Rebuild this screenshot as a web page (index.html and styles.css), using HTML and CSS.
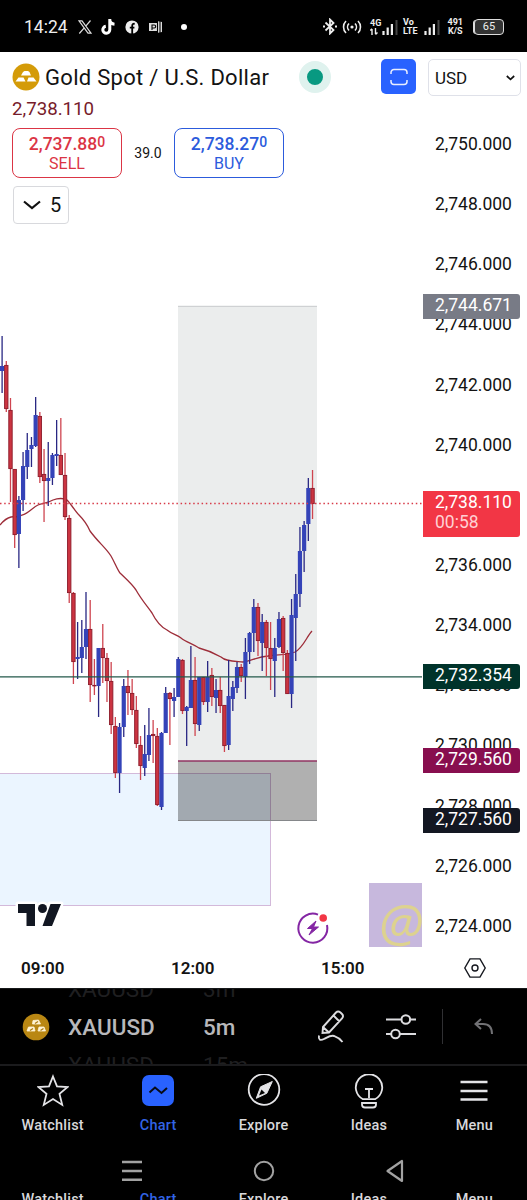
FILE: index.html
```
<!DOCTYPE html>
<html lang="en">
<head>
    <meta charset="UTF-8">
    <meta name="viewport" content="width=device-width, initial-scale=1.0">
    <title>XAUUSD Chart</title>
    <link rel="stylesheet" href="styles.css">
</head>
<body>
    <div class="status-bar">
        <div class="status-left">
            <span class="clock">14:24</span>
            <svg class="x-icon" width="14" height="14" viewBox="0 0 14 14"><path d="M1 .8h3l9 12.4h-3zM12.5.5 8 5.8M5.8 8.4 1.3 13.5" fill="none" stroke="#ddd" stroke-width="1.2"/></svg>
            <svg class="tiktok-icon" width="15" height="16" viewBox="0 0 15 16"><path d="M8.8 0v10.8a3.5 3.5 0 1 1-4-3.5M8.8 1c.3 2.5 2 4 4.7 4.2" fill="none" stroke="#fff" stroke-width="3"/></svg>
            <svg class="fb-icon" width="14" height="14" viewBox="0 0 14 14"><circle cx="7" cy="7" r="6.6" fill="#eee"/><path d="M7.2 14V6c0-1.7.7-2.4 2.5-2.2M4.8 7.6h4.6" fill="none" stroke="#000" stroke-width="1.8"/></svg>
            <svg class="pp-icon" width="14" height="14" viewBox="0 0 14 14"><path d="M0 3h8v8H0zM8 1l5 1v10l-5 1z" fill="#ddd"/><path d="M3 10V5h2.2a1.4 1.4 0 0 1 0 3H3M8.5 1v12M11 1v12" fill="none" stroke="#000" stroke-width="1.1"/></svg>
            <span class="dot"></span>
        </div>
        <div class="status-right">
            <svg width="14" height="17" viewBox="0 0 14 17"><path d="m2.5 4.5 8 7.5L7 15.5v-14L10.500 5l-8 7.500" fill="none" stroke="#eee" stroke-width="1.800"/><path d="M0 8.500h2M12 8.500h2" stroke="#eee" stroke-width="2"/></svg>
            <svg class="hotspot" width="20" height="14" viewBox="0 0 20 14"><circle cx="10" cy="7" r="1.600" fill="#eee"/><path d="M7 3.500a5 5 0 0 0 0 7M13 3.500a5 5 0 0 1 0 7M4 1a8.500 8.500 0 0 0 0 12M16 1a8.500 8.500 0 0 1 0 12" fill="none" stroke="#eee" stroke-width="1.600"/></svg>
            <div class="signal">
                <div class="stack"><span>4G</span><svg width="8" height="7" viewBox="0 0 8 7"><path d="M2 7V1M.3 2.500 2 .8M5.500 0v6M7.500 4.500 5.500 6.500" stroke="#eee" stroke-width="1.400"/></svg></div>
                <svg class="bars" width="16" height="16" viewBox="0 0 16 16"><path d="M1.500 12v4M5.700 8.500V16M9.900 5v11" stroke="#eee" stroke-width="2.200"/><path d="M14.500 1v15" stroke="#444" stroke-width="2"/></svg>
            </div>
            <div class="stack volte"><span>Vo</span><span>LTE</span></div>
            <svg class="bars second" width="16" height="16" viewBox="0 0 16 16"><path d="M1.500 12v4M5.700 8.500V16M9.900 5v11" stroke="#eee" stroke-width="2.200"/><path d="M14.500 1v15" stroke="#444" stroke-width="2"/></svg>
            <div class="stack speed"><span>491</span><span>K/S</span></div>
            <div class="battery"><span>65</span></div>
        </div>
    </div>

    <div class="chart">
        <svg class="chart-canvas" width="422" height="896" viewBox="0 52 422 896">
            <rect class="zone" x="-5" y="773.500" width="275.500" height="132"/>
            <rect class="target" x="178" y="306" width="139" height="455"/>
            <rect class="stop" x="178" y="761" width="139" height="60"/>
            <path d="M178 306.300h139" stroke="#c9cacc"/>
            <path d="M178 820.500h139" stroke="#85878a"/>
            <path d="M178 761h139" stroke="#923562" stroke-width="1.400"/>
            <path class="ma" d="M0 525C4 520 7 518 11 517S18 518 22 515C29 513 33 507 38 505C44 503 48 503 53 500C58 498 64 498 67 500C71 504 75 511 79 515C84 520 87 524 90 531C98 542 106 548 111 556C115 563 117 569 120 573C126 579 131 583 136 590C141 599 147 606 152 613C156 621 161 627 167 630C172 634 177 635 181 638C186 642 193 644 199 648C207 650 214 653 221 657C225 661 233 661 243 662C251 661 257 657 268 656C277 654 286 656 295 652C303 648 307 636 312 631"/>
            <g id="candles"></g>
            <path d="M0 503.500h422" stroke="#d83a48" stroke-width="1.400" stroke-dasharray="1.500 2.700"/>
            <path d="M0 676.800h422" stroke="#23594a" stroke-width="1.300"/>
        </svg>

        <div class="pane">
            <div class="title-row">
                <svg width="28" height="28" viewBox="0 0 28 28"><circle cx="14" cy="14" r="13.500" fill="#d49b08"/><path d="m11 9 1.500-1h3.500l1.500 1 1.500 3.500H9zM6.500 14.500h5l2 4H3.500zM16.500 14.500h5l3 4h-9.500z" fill="#fff"/></svg>
                <h1>Gold Spot / U.S. Dollar</h1>
                <span class="market-open"></span>
                <button class="fullscreen"><svg width="18" height="18" viewBox="0 0 18 18"><path d="M1 6V4.500A3 3 0 0 1 4 1.500h10a3 3 0 0 1 3 3V6M1 12v1.500a3 3 0 0 0 3 3h10a3 3 0 0 0 3-3V12" fill="none" stroke="#e9eeff" stroke-width="1.500"/></svg></button>
            </div>
            <div class="last-price">2,738.110</div>
            <div class="trade-row">
                <button class="trade sell"><b>2,737.88<sup>0</sup></b><span>SELL</span></button>
                <span class="spread">39.0</span>
                <button class="trade buy"><b>2,738.27<sup>0</sup></b><span>BUY</span></button>
            </div>
            <button class="indicators"><svg width="18" height="10" viewBox="0 0 18 10"><path d="m1 1.500 8 6.500 8-6.500" fill="none" stroke="#111" stroke-width="2.200"/></svg>5</button>
        </div>

        <div class="axis">
            <button class="currency">USD<svg width="9" height="6" viewBox="0 0 9 6"><path d="m.8 1 3.700 3.300L8.200 1" fill="none" stroke="#111" stroke-width="1.700"/></svg></button>
            <div class="prices">
                <span>2,750.000</span>
                <span>2,748.000</span>
                <span>2,746.000</span>
                <span>2,744.000</span>
                <span>2,742.000</span>
                <span>2,740.000</span>
                <span>2,738.000</span>
                <span>2,736.000</span>
                <span>2,734.000</span>
                <span>2,732.000</span>
                <span>2,730.000</span>
                <span>2,728.000</span>
                <span>2,726.000</span>
                <span>2,724.000</span>
            </div>
            <div class="tag tag-target">2,744.671</div>
            <div class="tag tag-last">2,738.110<small>00:58</small></div>
            <div class="tag tag-level">2,732.354</div>
            <div class="tag tag-entry">2,729.560</div>
            <div class="tag tag-stop">2,727.560</div>
        </div>

        <div class="times">
            <span>09:00</span>
            <span>12:00</span>
            <span>15:00</span>
        </div>
        <div class="axis-settings">
            <svg width="22" height="20" viewBox="0 0 22 20"><path d="M6 .9h10L21.200 10 16 19.100H6L.8 10z" fill="none" stroke="#16181f" stroke-width="1.400"/><circle cx="11" cy="10" r="3" fill="none" stroke="#16181f" stroke-width="1.400"/></svg>
        </div>

        <svg class="tv-logo" width="50" height="30" viewBox="0 0 50 30"><g stroke="#fff" stroke-width="5" stroke-linejoin="round" fill="#fff"><path d="M3 4h17v22h-8.500V13H3zM35 4h11l-9.500 22H28z"/><circle cx="27.500" cy="8.500" r="4.500"/></g><g fill="#121722"><path d="M3 4h17v22h-8.500V13H3zM35.500 4H46l-9 22h-9.500z"/><circle cx="27.500" cy="8.500" r="4.500"/></g></svg>
        <svg class="flash" width="34" height="34" viewBox="0 0 34 34"><path d="M22 3.600A14.500 14.500 0 1 0 31 14" fill="none" stroke="#8426a4" stroke-width="2"/><path d="m20 10-8.500 7.500h5L13 24l9.500-8h-5z" fill="#8426a4" stroke="#8426a4" stroke-linejoin="round"/><circle cx="27.200" cy="7" r="3.800" fill="#f23645"/></svg>
        <div class="note">@</div>
    </div>

    <div class="toolbar">
        <div class="symbol">
            <svg width="28" height="28" viewBox="0 0 28 28"><circle cx="14" cy="14" r="13.300" fill="#b98713"/><g fill="#fff4d5" stroke="#fff4d5" stroke-width=".8" stroke-linejoin="round"><path d="m11 7.500 5.500-.5L18.500 11h-8zM6.500 14h5.500l1 4H5zM17 14h5l1.500 4h-7.500z"/></g><path d="m13 10.500 3-2M8 17.500l3-2M18.500 17.500l3-2" stroke="#ad7d15" stroke-width="1.400"/></svg>
        </div>
        <div class="wheel wheel-symbol"><span>XAUUSD</span><strong>XAUUSD</strong><span>XAUUSD</span></div>
        <div class="wheel wheel-interval"><span>3m</span><strong>5m</strong><span>15m</span></div>
        <svg class="draw" width="30" height="36" viewBox="0 0 30 36"><path d="m6 18 13-14.500q2-2 4.500 0l1.500 1.500q2 2 0 4.500L12 23.500l-6.500.5zM16.500 6.500l6 6M6.500 18.500l5 4.500" fill="none" stroke="#dcdcdf" stroke-width="1.900"/><path d="M2 26.500c-.8 4 1 5.500 5 3.500s7-4 10-3 5 1.500 8.500 6" fill="none" stroke="#dcdcdf" stroke-width="1.900"/></svg>
        <svg class="sliders" width="30" height="26" viewBox="0 0 30 26"><path d="M0 5.500h15.500M24 5.500h6M0 20h5M14 20h16" stroke="#dcdcdf" stroke-width="2"/><circle cx="19.800" cy="5.500" r="4.300" fill="none" stroke="#dcdcdf" stroke-width="2"/><circle cx="9.500" cy="20" r="4.300" fill="none" stroke="#dcdcdf" stroke-width="2"/></svg>
        <span class="divider"></span>
        <svg class="undo" width="20" height="17" viewBox="0 0 20 17"><path d="M7 1 1.500 6 7 11M1.500 6H9c6 0 9 4 9 10" fill="none" stroke="#717174" stroke-width="2"/></svg>
    </div>

    <div class="nav">
        <a><svg width="32" height="34" viewBox="0 0 32 34"><path d="m16 2.500 4 9.800 10.700.7-8.200 6.900 2.700 11L16 25l-9.200 5.900 2.700-11L1.300 13l10.700-.7z" fill="none" stroke="#e4e4e7" stroke-width="1.800"/></svg>Watchlist</a>
        <a class="active"><svg width="32" height="34" viewBox="0 0 32 34"><rect y="1" width="32" height="31" rx="7" fill="#2962ff"/><path d="m7.500 18.500 5.500-5 6.500 5.500 5.500-5" fill="none" stroke="#080b16" stroke-width="2"/></svg>Chart</a>
        <a><svg width="34" height="34" viewBox="0 0 34 34"><circle cx="17" cy="15.500" r="15.300" fill="none" stroke="#e4e4e7" stroke-width="1.800"/><path d="m25.300 7.500-5.500 11.800-10.500 5 4.300-11.500z" fill="#e4e4e7" stroke="#e4e4e7" stroke-linejoin="round"/><path d="m12 21.500 2.500-6 3.500 3.500z" fill="#000"/></svg>Explore</a>
        <a><svg width="30" height="36" viewBox="0 0 30 36"><path d="M9 25.200a13.200 13.200 0 1 1 12 0z" fill="none" stroke="#e4e4e7" stroke-width="1.800"/><path d="M11 15h8M15 15v9M8 29h14v1.500a3 3 0 0 1-3 3h-8a3 3 0 0 1-3-3z" fill="none" stroke="#e4e4e7" stroke-width="1.800"/></svg>Ideas</a>
        <a><svg width="28" height="34" viewBox="0 0 28 34"><path d="M.5 8h27M.5 17h27M.5 25.500h27" stroke="#e4e4e7" stroke-width="2.500"/></svg>Menu</a>
    </div>
    <div class="system-nav">
        <span><svg width="20" height="22" viewBox="0 0 20 22"><path d="M0 2h20M0 11h20M0 19.800h20" stroke="#a2a2a2" stroke-width="2.500"/></svg></span>
        <span><svg width="22" height="22" viewBox="0 0 22 22"><circle cx="11" cy="11" r="9.200" fill="none" stroke="#a2a2a2" stroke-width="2"/></svg></span>
        <span><svg width="20" height="24" viewBox="0 0 20 24"><path d="M17 2v20L2.500 12z" fill="none" stroke="#a2a2a2" stroke-width="2.200" stroke-linejoin="round"/></svg></span>
    </div>
    <div class="nav-overflow">
        <span>Watchlist</span><span class="active">Chart</span><span>Explore</span><span>Ideas</span><span>Menu</span>
    </div>

    <script src="chart.js"></script>
</body>
</html>
```
FILE: styles.css
```
/* General Styles */
* {
    box-sizing: border-box;
}

body {
    margin: 0;
    width: 527px;
    height: 1200px;
    overflow: hidden;
    background: #000;
    color: #131313;
    font-family: Roboto, sans-serif;
}

button {
    background: #fff;
    font-family: inherit;
    padding: 0;
}

svg {
    display: block;
    flex: none;
}

/* Status bar */
.status-bar {
    height: 52px;
    display: flex;
    justify-content: space-between;
    padding: 1px 24px 0;
    color: #eee;
}

.status-left, .status-right {
    display: flex;
    align-items: center;
}

.clock {
    font-size: 17.5px;
    width: 54px;
}

.tiktok-icon {
    margin-left: 9px;
}

.fb-icon {
    margin-left: 9px;
}

.pp-icon {
    margin-left: 10px;
}

.dot {
    width: 6px;
    height: 6px;
    margin-left: 18px;
    border-radius: 50%;
    background: #fff;
}

.status-right {
    margin-right: -1px;
}

.hotspot {
    margin-left: 5px;
}

.signal {
    display: flex;
    align-items: flex-end;
    margin-left: 8px;
}

.stack {
    display: flex;
    flex-direction: column;
    font-size: 9px;
    font-weight: 700;
    line-height: 9px;
}

.signal .stack {
    width: 12px;
}

.volte {
    margin-left: 5px;
}

.second {
    margin-left: 6px;
}

.speed {
    margin-left: 8px;
    align-items: center;
}

.battery {
    width: 30px;
    height: 16px;
    margin-left: 11px;
    border: 1.5px solid #ddd;
    border-radius: 4px;
    background: #333;
    box-shadow: -2px 0 0 -1px #ddd;
    font-size: 11px;
    line-height: 14px;
    text-align: center;
}

/* Chart */
.chart {
    position: relative;
    height: 936px;
    display: grid;
    grid-template-columns: 422px 105px;
    grid-template-rows: 896px 40px;
    background: #fff;
}

.chart-canvas {
    position: absolute;
    left: 0;
    top: 0;
}

.zone {
    fill: #ebf5ff;
    stroke: #d3b9da;
}

.target {
    fill: #ebeded;
}

.stop {
    fill: rgba(0, 0, 0, 0.31);
}

.ma {
    fill: none;
    stroke: #9d2d39;
    stroke-width: 1.3;
}

.pane {
    position: relative;
    padding: 6px 6px 0 12px;
}

.title-row {
    display: flex;
    align-items: center;
    height: 38px;
}

h1 {
    margin: 0 0 0 5px;
    width: 254px;
    font-size: 22px;
    font-weight: 400;
    letter-spacing: 0.3px;
    white-space: nowrap;
}

.market-open {
    width: 32px;
    height: 32px;
    border: 8.500px solid #dff2ee;
    border-radius: 50%;
    background: #089981;
}

.fullscreen {
    width: 35px;
    height: 35px;
    margin: -1px 0 0 auto;
    display: flex;
    align-items: center;
    justify-content: center;
    border: none;
    border-radius: 5px;
    background: #2962ff;
}

.last-price {
    height: 32px;
    line-height: 27px;
    font-size: 18.7px;
    color: #771c2b;
}

.trade-row {
    display: flex;
    align-items: center;
}

.trade {
    width: 110px;
    height: 50px;
    display: flex;
    flex-direction: column;
    align-items: center;
    justify-content: center;
    border: 1.5px solid;
    border-radius: 8px;
    font-size: 16px;
    line-height: 19px;
}

.trade b {
    font-size: 17.5px;
    font-weight: 500;
    line-height: 20px;
}

.trade sup {
    font-size: 14px;
    line-height: 0;
    vertical-align: 3px;
}

.sell {
    color: #db3545;
}

.buy {
    color: #2c5bdc;
}

.spread {
    width: 52px;
    font-size: 14px;
    text-align: center;
}

.indicators {
    width: 56px;
    height: 38px;
    margin: 8px 0 0 1px;
    padding-left: 2px;
    display: flex;
    align-items: center;
    justify-content: center;
    gap: 9px;
    border: 1px solid #d8d9dd;
    border-radius: 4px;
    font-size: 20px;
    color: #131313;
}

/* Price axis */
.axis {
    position: relative;
    padding-top: 7px;
}

.currency {
    width: 93px;
    height: 37px;
    margin-left: 6px;
    padding: 0 5px 0 6px;
    display: flex;
    align-items: center;
    justify-content: space-between;
    border: 1px solid #dfe1e9;
    border-radius: 5px;
    font-size: 17px;
    color: #131313;
}

.prices {
    height: 802px;
    margin-top: 38px;
    padding-left: 13px;
    display: flex;
    flex-direction: column;
    justify-content: space-between;
    font-size: 17.5px;
    line-height: 20px;
}

.tag {
    position: absolute;
    left: 1px;
    width: 97px;
    height: 25px;
    padding-left: 12px;
    border-radius: 0 3px 3px 0;
    color: #fff;
    font-size: 17.5px;
    line-height: 22px;
}

.tag small {
    display: block;
    font-size: 17.5px;
    line-height: 19px;
    color: #ffd0d3;
}

.tag-target {
    top: 242px;
    background: #787b86;
}

.tag-last {
    top: 439px;
    height: 46px;
    background: #f23645;
}

.tag-level {
    top: 612px;
    background: #00332a;
}

.tag-entry {
    top: 696px;
    background: #880e4f;
}

.tag-stop {
    top: 756px;
    background: #131722;
}

/* Time axis */
.times {
    display: flex;
    align-items: center;
    gap: 106.500px;
    padding-left: 21px;
    font-size: 17px;
    font-weight: 600;
}

.axis-settings {
    display: flex;
    align-items: center;
    justify-content: center;
}

.tv-logo {
    position: absolute;
    left: 15px;
    top: 848px;
}

.flash {
    position: absolute;
    left: 296px;
    top: 859px;
}

.note {
    position: absolute;
    left: 369px;
    top: 831px;
    width: 53px;
    height: 64px;
    padding-left: 10px;
    overflow: hidden;
    background: #c7b8dd;
    color: #ddd28f;
    font-family: "Open Sans", sans-serif;
    font-size: 52px;
    font-style: italic;
    line-height: 78px;
}

/* Toolbar */
.toolbar {
    height: 78px;
    display: flex;
    align-items: center;
    padding-left: 22px;
    border-bottom: 2px solid #1b1b1d;
    border-top: 1px solid #16181a;
    overflow: hidden;
}

.wheel {
    display: flex;
    flex-direction: column;
    justify-content: center;
    height: 76px;
    font-size: 22.500px;
    line-height: 38px;
    color: #1f1f20;
}

.wheel strong {
    font-weight: 500;
    color: #b8b8bb;
}

.wheel-symbol {
    width: 135px;
    margin-left: 18px;
}

.wheel-interval {
    width: 114px;
}

.sliders {
    margin-left: 39px;
}

.divider {
    width: 1px;
    height: 35px;
    margin-left: 26px;
    background: #303033;
}

.undo {
    margin-left: 31px;
}

/* Bottom navigation */
.nav {
    height: 78px;
    padding-top: 8px;
    display: flex;
}

.nav a, .nav-overflow span {
    flex: 1;
    display: flex;
    flex-direction: column;
    align-items: center;
    font-size: 14.5px;
    font-weight: 500;
    line-height: 18px;
    letter-spacing: 0.2px;
    color: #d8d8db;
}

.nav a {
    justify-content: space-between;
    height: 61px;
}

.nav .active, .nav-overflow .active {
    color: #3264e6;
}

.system-nav {
    height: 47px;
    padding: 6px 66px 0;
    display: flex;
}

.system-nav span {
    flex: 1;
    display: flex;
    align-items: center;
    justify-content: center;
}

.nav-overflow {
    height: 9px;
    display: flex;
    overflow: hidden;
}
```
FILE: chart.js
```
// [high, body top, body bottom, low, rising]
const candles = [
    [336, 366, 371, 393, 1], [361, 365, 409, 412, 0], [398, 410, 469, 502, 0], [469, 469, 535, 548, 0],
    [496, 500, 534, 568, 1], [452, 466, 500, 511, 1], [433, 450, 467, 479, 1], [437, 445, 449, 467, 1],
    [397, 415, 446, 447, 1], [412, 416, 477, 483, 0], [449, 474, 481, 522, 0], [442, 478, 481, 506, 1],
    [453, 455, 478, 485, 1], [420, 454, 456, 466, 1], [418, 455, 475, 475, 0], [453, 475, 517, 520, 0],
    [515, 518, 593, 603, 0], [592, 593, 662, 684, 0], [622, 657, 659, 679, 1], [620, 647, 658, 673, 1],
    [592, 629, 647, 659, 1], [600, 629, 685, 702, 0], [659, 685, 686, 695, 0], [648, 648, 686, 717, 1],
    [624, 648, 658, 683, 0], [653, 658, 681, 702, 0], [662, 681, 725, 734, 0], [717, 726, 773, 778, 0],
    [723, 727, 773, 793, 1], [679, 686, 727, 737, 1], [670, 686, 693, 715, 0], [679, 693, 710, 715, 0],
    [696, 710, 744, 748, 0], [736, 745, 766, 780, 0], [725, 754, 768, 776, 1], [708, 735, 755, 761, 1],
    [720, 734, 736, 763, 0], [728, 736, 805, 806, 0], [732, 733, 807, 810, 1], [687, 693, 733, 733, 1],
    [692, 693, 699, 745, 0], [688, 697, 701, 717, 1], [657, 659, 697, 697, 1], [659, 660, 711, 714, 0],
    [706, 707, 711, 746, 1], [646, 680, 708, 708, 1], [657, 680, 724, 736, 0], [677, 677, 725, 731, 1],
    [677, 677, 702, 705, 0], [661, 677, 702, 712, 1], [668, 675, 697, 706, 0], [679, 690, 698, 713, 1],
    [677, 690, 706, 713, 0], [705, 705, 746, 752, 0], [660, 696, 745, 750, 1], [681, 687, 699, 711, 1],
    [662, 667, 688, 693, 1], [664, 667, 676, 682, 0], [638, 652, 677, 699, 1], [632, 633, 652, 664, 1],
    [599, 607, 633, 652, 1], [603, 607, 641, 656, 0], [614, 622, 643, 671, 1], [620, 622, 648, 676, 0],
    [622, 648, 659, 690, 0], [638, 648, 661, 697, 1], [612, 619, 647, 648, 1], [616, 618, 653, 671, 0],
    [650, 653, 694, 694, 0], [599, 615, 694, 708, 1], [574, 594, 618, 661, 1], [527, 551, 594, 607, 1],
    [521, 525, 551, 572, 1], [478, 488, 524, 541, 1], [470, 488, 504, 519, 0]
];

const step = 4.195;

document.getElementById("candles").innerHTML = candles.map(([high, top, bottom, low, up], i) => {
    const x = 2.1 + i * step;
    const wick = `<path d="M${x} ${high}V${low}" stroke="${up ? "#292783" : "#cf4550"}" stroke-width="1.3"/>`;
    if (up) {
        return wick + `<rect x="${x - 2.1}" y="${top}" width="4.2" height="${bottom - top}" fill="#3443b8"/>`;
    }
    return wick + `<rect x="${x - 1.7}" y="${top + 0.4}" width="3.4" height="${Math.max(bottom - top - 0.8, 0.5)}" fill="#cb3441" stroke="#8c1b2a" stroke-width="0.9"/>`;
}).join("");
```
